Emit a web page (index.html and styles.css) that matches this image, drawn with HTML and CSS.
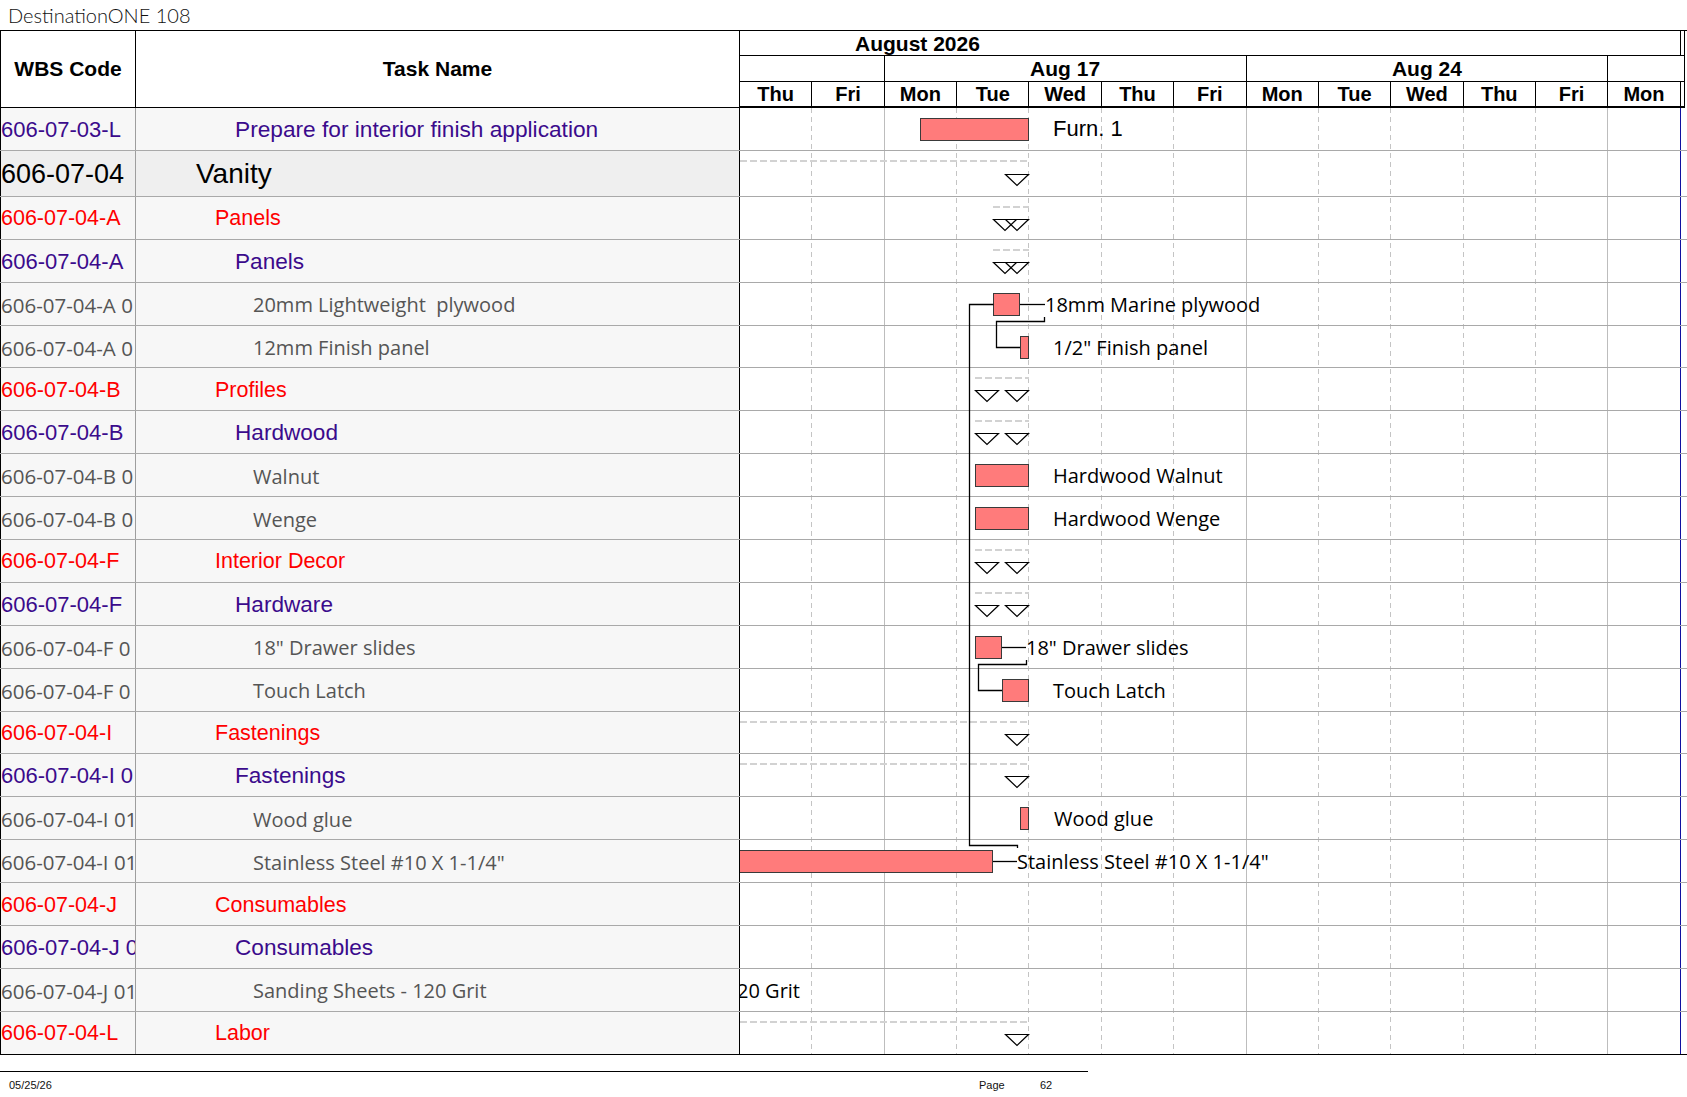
FILE: index.html
```html
<!DOCTYPE html>
<html lang="en">
<head>
<meta charset="utf-8">
<title>DestinationONE 108</title>
<link rel="stylesheet" href="styles.css">
</head>
<body>
<div class="doc-title">DestinationONE 108</div>

<div class="sheet">
  <div class="sheet-head">
    <div class="col-head wbs-head">WBS Code</div>
    <div class="col-head task-head">Task Name</div>
    <div class="timescale">
      <div class="tier tier-month">
        <div class="month-cell">August 2026</div>
      </div>
      <div class="tier tier-week">
        <div class="week-cell span2"></div>
        <div class="week-cell span5">Aug 17</div>
        <div class="week-cell span5">Aug 24</div>
        <div class="week-cell rest"></div>
      </div>
      <div class="tier tier-day">
        <div class="day">Thu</div><div class="day">Fri</div>
        <div class="day">Mon</div><div class="day">Tue</div><div class="day">Wed</div><div class="day">Thu</div><div class="day">Fri</div>
        <div class="day">Mon</div><div class="day">Tue</div><div class="day">Wed</div><div class="day">Thu</div><div class="day">Fri</div>
        <div class="day">Mon</div>
        <div class="day-rest"></div>
      </div>
    </div>
  </div>

  <div class="sheet-body">
    <div class="gridlines">
      <div class="gl"></div><div class="gl week-end"></div>
      <div class="gl"></div><div class="gl"></div><div class="gl"></div><div class="gl"></div><div class="gl week-end"></div>
      <div class="gl"></div><div class="gl"></div><div class="gl"></div><div class="gl"></div><div class="gl week-end"></div>
      <div class="gl last"></div>
    </div>

    <div class="row t-top">
      <div class="c-wbs">606-07-03-L</div>
      <div class="c-task">Prepare for interior finish application</div>
      <div class="c-chart">
        <div class="bar" style="left:180px;width:109px"></div>
        <div class="blabel arial" style="left:313px">Furn. 1</div>
      </div>
    </div>

    <div class="row t-sum1">
      <div class="c-wbs">606-07-04</div>
      <div class="c-task">Vanity</div>
      <div class="c-chart">
        <div class="sumline" style="left:0;width:289px"></div>
        <svg class="tri" style="left:265px" viewBox="0 0 24 12"><polygon points="0.5,0.5 23.5,0.5 12,11.5"/></svg>
      </div>
    </div>

    <div class="row t-sum2">
      <div class="c-wbs">606-07-04-A</div>
      <div class="c-task">Panels</div>
      <div class="c-chart">
        <div class="sumline" style="left:253px;width:36px"></div>
        <svg class="tri" style="left:253px" viewBox="0 0 24 12"><polygon points="0.5,0.5 23.5,0.5 12,11.5"/></svg>
        <svg class="tri" style="left:265px" viewBox="0 0 24 12"><polygon points="0.5,0.5 23.5,0.5 12,11.5"/></svg>
      </div>
    </div>

    <div class="row t-sum3">
      <div class="c-wbs">606-07-04-A</div>
      <div class="c-task">Panels</div>
      <div class="c-chart">
        <div class="sumline" style="left:253px;width:36px"></div>
        <svg class="tri" style="left:253px" viewBox="0 0 24 12"><polygon points="0.5,0.5 23.5,0.5 12,11.5"/></svg>
        <svg class="tri" style="left:265px" viewBox="0 0 24 12"><polygon points="0.5,0.5 23.5,0.5 12,11.5"/></svg>
      </div>
    </div>

    <div class="row t-leaf">
      <div class="c-wbs">606-07-04-A 0</div>
      <div class="c-task">20mm Lightweight&nbsp; plywood</div>
      <div class="c-chart">
        <div class="bar" style="left:253px;width:27px"></div>
        <div class="blabel" style="left:305px">18mm Marine plywood</div>
      </div>
    </div>

    <div class="row t-leaf">
      <div class="c-wbs">606-07-04-A 0</div>
      <div class="c-task">12mm Finish panel</div>
      <div class="c-chart">
        <div class="bar" style="left:280px;width:9px"></div>
        <div class="blabel" style="left:313px">1/2" Finish panel</div>
      </div>
    </div>

    <div class="row t-sum2">
      <div class="c-wbs">606-07-04-B</div>
      <div class="c-task">Profiles</div>
      <div class="c-chart">
        <div class="sumline" style="left:235px;width:54px"></div>
        <svg class="tri" style="left:235px" viewBox="0 0 24 12"><polygon points="0.5,0.5 23.5,0.5 12,11.5"/></svg>
        <svg class="tri" style="left:265px" viewBox="0 0 24 12"><polygon points="0.5,0.5 23.5,0.5 12,11.5"/></svg>
      </div>
    </div>

    <div class="row t-sum3">
      <div class="c-wbs">606-07-04-B</div>
      <div class="c-task">Hardwood</div>
      <div class="c-chart">
        <div class="sumline" style="left:235px;width:54px"></div>
        <svg class="tri" style="left:235px" viewBox="0 0 24 12"><polygon points="0.5,0.5 23.5,0.5 12,11.5"/></svg>
        <svg class="tri" style="left:265px" viewBox="0 0 24 12"><polygon points="0.5,0.5 23.5,0.5 12,11.5"/></svg>
      </div>
    </div>

    <div class="row t-leaf">
      <div class="c-wbs">606-07-04-B 0</div>
      <div class="c-task">Walnut</div>
      <div class="c-chart">
        <div class="bar" style="left:235px;width:54px"></div>
        <div class="blabel" style="left:313px">Hardwood Walnut</div>
      </div>
    </div>

    <div class="row t-leaf">
      <div class="c-wbs">606-07-04-B 0</div>
      <div class="c-task">Wenge</div>
      <div class="c-chart">
        <div class="bar" style="left:235px;width:54px"></div>
        <div class="blabel" style="left:313px">Hardwood Wenge</div>
      </div>
    </div>

    <div class="row t-sum2">
      <div class="c-wbs">606-07-04-F</div>
      <div class="c-task">Interior Decor</div>
      <div class="c-chart">
        <div class="sumline" style="left:235px;width:54px"></div>
        <svg class="tri" style="left:235px" viewBox="0 0 24 12"><polygon points="0.5,0.5 23.5,0.5 12,11.5"/></svg>
        <svg class="tri" style="left:265px" viewBox="0 0 24 12"><polygon points="0.5,0.5 23.5,0.5 12,11.5"/></svg>
      </div>
    </div>

    <div class="row t-sum3">
      <div class="c-wbs">606-07-04-F</div>
      <div class="c-task">Hardware</div>
      <div class="c-chart">
        <div class="sumline" style="left:235px;width:54px"></div>
        <svg class="tri" style="left:235px" viewBox="0 0 24 12"><polygon points="0.5,0.5 23.5,0.5 12,11.5"/></svg>
        <svg class="tri" style="left:265px" viewBox="0 0 24 12"><polygon points="0.5,0.5 23.5,0.5 12,11.5"/></svg>
      </div>
    </div>

    <div class="row t-leaf">
      <div class="c-wbs">606-07-04-F 0</div>
      <div class="c-task">18" Drawer slides</div>
      <div class="c-chart">
        <div class="bar" style="left:235px;width:27px"></div>
        <div class="blabel" style="left:286px">18" Drawer slides</div>
      </div>
    </div>

    <div class="row t-leaf">
      <div class="c-wbs">606-07-04-F 0</div>
      <div class="c-task">Touch Latch</div>
      <div class="c-chart">
        <div class="bar" style="left:262px;width:27px"></div>
        <div class="blabel" style="left:313px">Touch Latch</div>
      </div>
    </div>

    <div class="row t-sum2">
      <div class="c-wbs">606-07-04-I</div>
      <div class="c-task">Fastenings</div>
      <div class="c-chart">
        <div class="sumline" style="left:0;width:289px"></div>
        <svg class="tri" style="left:265px" viewBox="0 0 24 12"><polygon points="0.5,0.5 23.5,0.5 12,11.5"/></svg>
      </div>
    </div>

    <div class="row t-sum3">
      <div class="c-wbs">606-07-04-I 0</div>
      <div class="c-task">Fastenings</div>
      <div class="c-chart">
        <div class="sumline" style="left:0;width:289px"></div>
        <svg class="tri" style="left:265px" viewBox="0 0 24 12"><polygon points="0.5,0.5 23.5,0.5 12,11.5"/></svg>
      </div>
    </div>

    <div class="row t-leaf">
      <div class="c-wbs">606-07-04-I 01</div>
      <div class="c-task">Wood glue</div>
      <div class="c-chart">
        <div class="bar" style="left:280px;width:9px"></div>
        <div class="blabel" style="left:314px">Wood glue</div>
      </div>
    </div>

    <div class="row t-leaf">
      <div class="c-wbs">606-07-04-I 01</div>
      <div class="c-task">Stainless Steel #10 X 1-1/4"</div>
      <div class="c-chart">
        <div class="bar" style="left:-2px;width:255px"></div>
        <div class="blabel" style="left:277px">Stainless Steel #10 X 1-1/4"</div>
      </div>
    </div>

    <div class="row t-sum2">
      <div class="c-wbs">606-07-04-J</div>
      <div class="c-task">Consumables</div>
      <div class="c-chart"></div>
    </div>

    <div class="row t-sum3">
      <div class="c-wbs">606-07-04-J 0</div>
      <div class="c-task">Consumables</div>
      <div class="c-chart"></div>
    </div>

    <div class="row t-leaf">
      <div class="c-wbs">606-07-04-J 01</div>
      <div class="c-task">Sanding Sheets - 120 Grit</div>
      <div class="c-chart">
        <div class="blabel before" style="left:60px">Sanding Sheets - 120 Grit</div>
      </div>
    </div>

    <div class="row t-sum2">
      <div class="c-wbs">606-07-04-L</div>
      <div class="c-task">Labor</div>
      <div class="c-chart">
        <div class="sumline" style="left:0;width:289px"></div>
        <svg class="tri" style="left:265px" viewBox="0 0 24 12"><polygon points="0.5,0.5 23.5,0.5 12,11.5"/></svg>
      </div>
    </div>

    <svg class="links" viewBox="0 0 944 948" width="944" height="948">
      <path d="M253.5,196.5 H229.5 V737.5 H277.5 V740"/>
      <path d="M280,196.5 H305"/>
      <path d="M304.5,209 V213.5 H256.5 V239.5 H280"/>
      <path d="M262,539.5 H286"/>
      <path d="M286.5,552 V556.5 H238.5 V582.5 H262"/>
      <path d="M253,753.5 H277"/>
    </svg>
  </div>
</div>

<div class="footer">
  <span class="f-date">05/25/26</span>
  <span class="f-page">Page</span>
  <span class="f-num">62</span>
</div>
</body>
</html>
```

FILE: styles.css
```css
:root {
  --day: 72.36px;
  --row: 42.9px;
  --purple: #3b0b8c;
  --red: #ff0000;
  --leaf: #555555;
  --grid: #a9a9a9;
}

* { box-sizing: border-box; }

html, body {
  margin: 0;
  padding: 0;
  background: #ffffff;
}

body {
  width: 1687px;
  height: 1097px;
  overflow: hidden;
  font-family: "Liberation Sans", Arial, sans-serif;
  color: #000000;
}

.doc-title {
  height: 30px;
  padding-left: 8px;
  font-family: "Lato", "Open Sans", sans-serif;
  font-weight: 300;
  font-size: 20px;
  line-height: 30px;
  color: #111111;
}

/* ---------- header ---------- */
.sheet { width: 1687px; }

.sheet-head {
  display: flex;
  height: 78px;
  border-top: 1px solid #000000;
}

.col-head {
  display: flex;
  align-items: center;
  justify-content: center;
  font-weight: bold;
  font-size: 21px;
  border-right: 1px solid #000000;
  border-bottom: 1px solid #000000;
  background: #ffffff;
}

.wbs-head {
  width: 136px;
  border-left: 1px solid #000000;
}

.task-head { width: 604px; }

.timescale {
  width: 945px;
  display: flex;
  flex-direction: column;
  border-right: 1px solid #000000;
}

.tier {
  display: flex;
  font-weight: bold;
  border-bottom: 1px solid #000000;
}

.tier-month { height: 25px; }
.tier-week { height: 26px; }
.tier-day { height: 26px; border-bottom: 2px solid #000000; }

.month-cell {
  width: calc(var(--day) * 13);
  border-right: 1px solid #000000;
  font-size: 21px;
  line-height: 25px;
  padding-left: 115px;
}

.week-cell {
  border-right: 1px solid #000000;
  font-size: 21px;
  line-height: 25px;
  text-align: center;
}

.week-cell.span2 { width: calc(var(--day) * 2); }
.week-cell.span5 { width: calc(var(--day) * 5); }
.week-cell.rest { flex: 1; border-right: none; }

.day {
  width: var(--day);
  border-right: 1px solid #000000;
  font-size: 20px;
  line-height: 25px;
  text-align: center;
}

.day-rest { flex: 1; }

/* ---------- body ---------- */
.sheet-body {
  position: relative;
}

.gridlines {
  position: absolute;
  top: 0;
  left: 740px;
  bottom: 0;
  display: flex;
}

.gl {
  width: var(--day);
  background: repeating-linear-gradient(to bottom, #c4c4c4 0 5px, transparent 5px 9px) right top / 1px 100% no-repeat;
}

.gl.week-end {
  background: linear-gradient(#bdbdbd, #bdbdbd) right top / 1px 100% no-repeat;
}

.gl.last {
  background: linear-gradient(#1010a0, #1010a0) right top / 1px 100% no-repeat;
}

.row {
  position: relative;
  display: flex;
  height: var(--row);
  border-bottom: 1px solid var(--grid);
}

.row:first-of-type { height: 43px; }

.row:last-of-type { border-bottom-color: #000000; }

.c-wbs {
  width: 136px;
  flex: none;
  display: flex;
  align-items: center;
  padding-top: 2px;
  white-space: nowrap;
  overflow: hidden;
  border-left: 1px solid #000000;
  border-right: 1px solid #9e9e9e;
  background: #f7f7f7;
}

.c-task {
  width: 604px;
  flex: none;
  display: flex;
  align-items: center;
  padding-top: 2px;
  white-space: nowrap;
  overflow: hidden;
  border-right: 1px solid #000000;
  background: #f7f7f7;
}

.c-chart {
  position: relative;
  width: 944px;
  flex: none;
  overflow: hidden;
}

/* row types */
.t-top .c-wbs, .t-top .c-task { color: var(--purple); font-size: 22px; }
.t-top .c-task { padding-left: 99px; font-size: 22.7px; }

.t-sum1 { height: 46px; }
.t-sum1 .c-wbs, .t-sum1 .c-task { background: #efefef; font-size: 28px; }
.t-sum1 .c-wbs { font-size: 27px; }
.t-sum1 .c-task { padding-left: 60px; }

.t-sum2 .c-wbs, .t-sum2 .c-task { color: var(--red); font-size: 21.5px; }
.t-sum2 .c-task { padding-left: 79px; }

.t-sum3 .c-wbs, .t-sum3 .c-task { color: var(--purple); font-size: 22px; }
.t-sum3 .c-task { padding-left: 99px; font-size: 22.6px; }

.t-leaf .c-wbs, .t-leaf .c-task {
  color: var(--leaf);
  font-family: "Open Sans", "Noto Sans", sans-serif;
  font-size: 20px;
}
.t-leaf .c-wbs { font-size: 20.5px; }
.t-leaf .c-task { padding-left: 117px; }

/* chart items */
.bar {
  position: absolute;
  top: 10px;
  height: 23px;
  background: #ff7b7b;
  border: 1px solid #3a3a3a;
}

.blabel {
  position: absolute;
  top: 0;
  height: 100%;
  display: flex;
  align-items: center;
  padding-top: 1px;
  white-space: nowrap;
  font-family: "Open Sans", "Noto Sans", sans-serif;
  font-size: 20px;
  color: #000000;
}

.blabel.arial {
  font-family: "Liberation Sans", Arial, sans-serif;
  font-size: 22px;
}

.blabel.before { transform: translateX(-100%); }

.sumline {
  position: absolute;
  top: 9px;
  height: 2px;
  background: repeating-linear-gradient(to right, #d2d2d2 0 7px, transparent 7px 10px);
}

.tri {
  position: absolute;
  top: 22px;
  width: 24px;
  height: 12px;
  overflow: visible;
}

.t-sum1 .tri { top: 23px; }

.tri polygon {
  fill: none;
  stroke: #000000;
  stroke-width: 1.2;
}

.links {
  position: absolute;
  top: 0;
  left: 740px;
  pointer-events: none;
}

.links path {
  fill: none;
  stroke: #000000;
  stroke-width: 1.3;
}

/* ---------- footer ---------- */
.footer {
  width: 1088px;
  margin-top: 16px;
  border-top: 1px solid #000000;
  display: flex;
  padding-top: 6px;
  font-size: 11px;
  line-height: 14px;
  color: #111111;
}

.f-date { width: 979px; padding-left: 9px; }
.f-page { width: 61px; }
```
